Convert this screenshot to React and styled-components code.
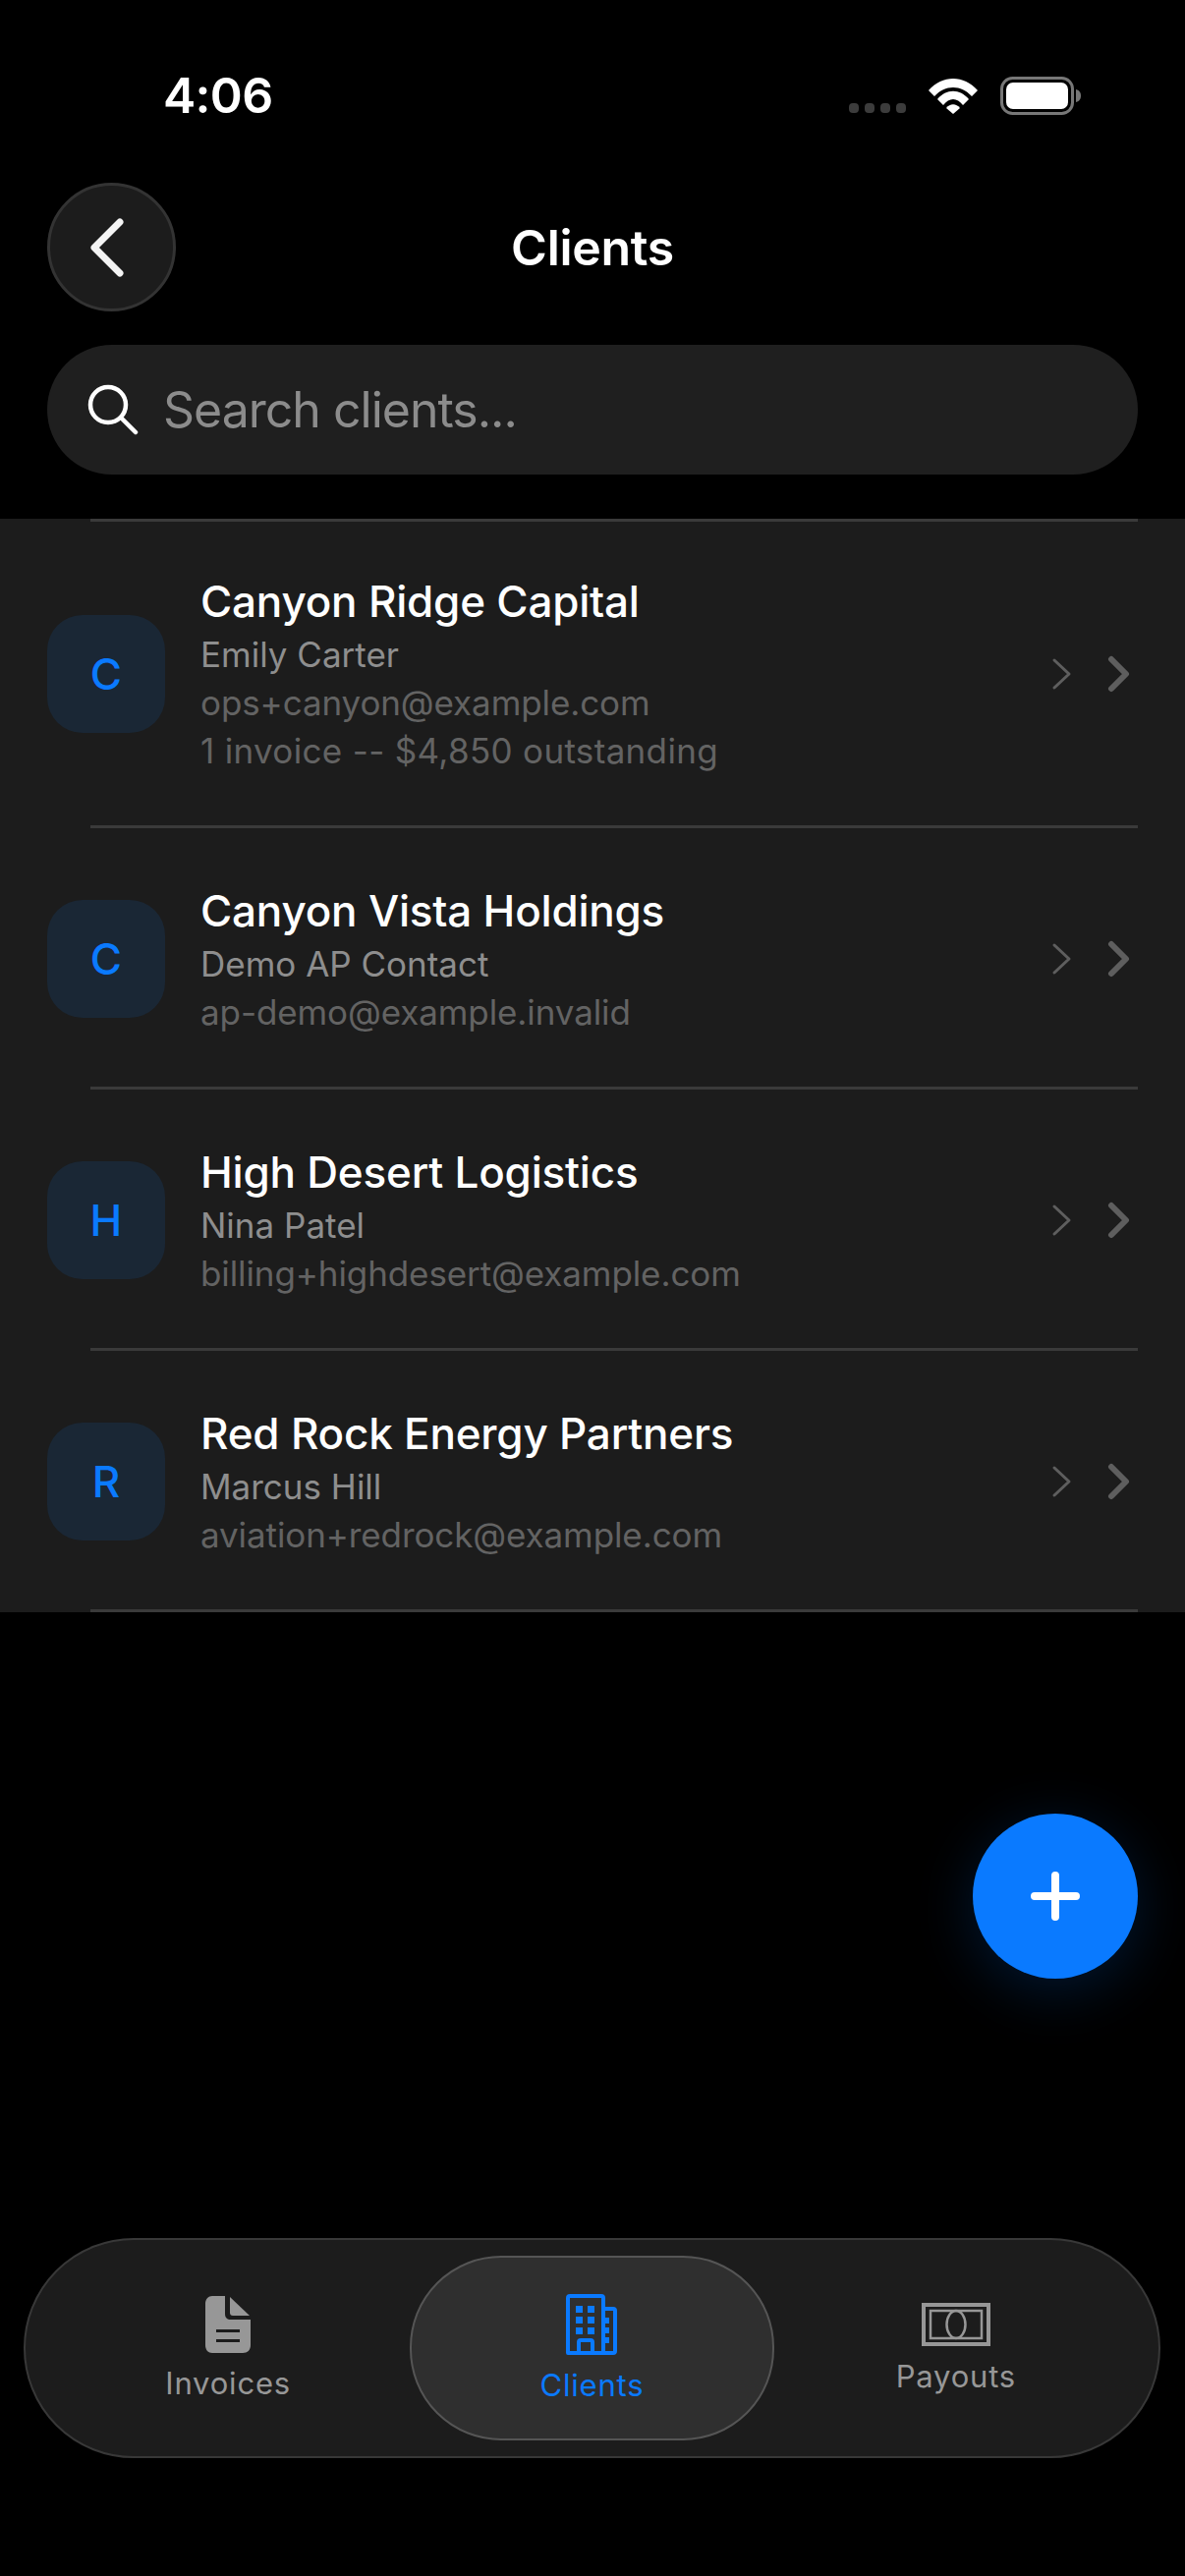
import React from "react"
import styled, { createGlobalStyle } from "styled-components"

const GlobalStyle = createGlobalStyle`
  html, body {
    margin: 0;
    padding: 0;
    background: #000;
    font-family: "Inter", "Liberation Sans", sans-serif;
  }
`

const clients = [
  { name: "Canyon Ridge Capital", contact: "Emily Carter", email: "ops+canyon@example.com", note: "1 invoice -- $4,850 outstanding" },
  { name: "Canyon Vista Holdings", contact: "Demo AP Contact", email: "ap-demo@example.invalid" },
  { name: "High Desert Logistics", contact: "Nina Patel", email: "billing+highdesert@example.com" },
  { name: "Red Rock Energy Partners", contact: "Marcus Hill", email: "aviation+redrock@example.com" },
]

const App = () => (
  <Page>
    <GlobalStyle />
    <StatusBar>
      <Clock>4:06</Clock>
      <StatusIcons>
        <Dots><i /><i /><i /><i /></Dots>
        <svg width="52" height="38" viewBox="0 0 52 38">
          <path d="M1 14 C15 -2 37 -2 51 14 L45 20 C34 8 18 8 7 20 Z" fill="#fff" />
          <path d="M10 23 C19 12 33 12 42 23 L36 29 C30 21 22 21 16 29 Z" fill="#fff" />
          <path d="M19 32 C23 27 29 27 33 32 L26 38 Z" fill="#fff" />
        </svg>
        <svg width="84" height="40" viewBox="0 0 84 40">
          <rect x="1.500" y="1.500" width="72" height="36" rx="11" fill="none" stroke="#777" strokeWidth="3" />
          <rect x="6" y="6" width="63" height="27" rx="7" fill="#fff" />
          <path d="M77 13 C81 14 82 17 82 19.500 C82 22 81 25 77 26 Z" fill="#777" />
        </svg>
      </StatusIcons>
    </StatusBar>

    <NavRow>
      <BackButton>
        <svg width="40" height="62" viewBox="0 0 40 62">
          <path d="M34 5 L8 31 L34 57" fill="none" stroke="#f4f4f4" strokeWidth="7" strokeLinecap="round" strokeLinejoin="round" />
        </svg>
      </BackButton>
      <Title>Clients</Title>
    </NavRow>

    <SearchBar>
      <svg width="52" height="52" viewBox="0 0 52 52">
        <circle cx="21" cy="21" r="18" fill="none" stroke="#fff" strokeWidth="4.500" />
        <path d="M34 34 L49 49" fill="none" stroke="#fff" strokeWidth="4.500" strokeLinecap="round" />
      </svg>
      <SearchText>Search clients...</SearchText>
    </SearchBar>

    <ClientList>
      <Divider />
      {clients.map((c) => (
        <React.Fragment key={c.name}>
          <ClientRow $tall={!!c.note}>
            <Avatar>{c.name[0]}</Avatar>
            <ClientInfo>
              <ClientName>{c.name}</ClientName>
              <ContactLine>{c.contact}</ContactLine>
              <MutedLine>{c.email}</MutedLine>
              {c.note && <NoteLine>{c.note}</NoteLine>}
            </ClientInfo>
            <Chevrons>
              <svg width="22" height="34" viewBox="0 0 22 34">
                <path d="M3 3 L18 17 L3 31" fill="none" stroke="#5e5e5e" strokeWidth="3" strokeLinecap="round" strokeLinejoin="round" />
              </svg>
              <svg width="26" height="38" viewBox="0 0 26 38">
                <path d="M5 4 L20 19 L5 34" fill="none" stroke="#5e5e5e" strokeWidth="6" strokeLinecap="round" strokeLinejoin="round" />
              </svg>
            </Chevrons>
          </ClientRow>
          <Divider />
        </React.Fragment>
      ))}
    </ClientList>

    <AddButton>
      <svg width="50" height="50" viewBox="0 0 50 50">
        <path d="M25 4 V46 M4 25 H46" stroke="#fff" strokeWidth="8" strokeLinecap="round" />
      </svg>
    </AddButton>

    <TabBar>
      <Tab>
        <svg width="46" height="58" viewBox="0 0 46 58">
          <path d="M7 0 H20 V18 C20 22 22 24 26 24 H46 V50 C46 55 43 58 38 58 H7 C3 58 0 55 0 50 V8 C0 3 3 0 7 0 Z M11 34 V37 H35 V34 Z M11 44 V47 H35 V44 Z" fill="#979797" fillRule="evenodd" />
          <path d="M25 1 L45 20 H28 C26 20 25 19 25 17 Z" fill="#979797" />
        </svg>
        <TabLabel>Invoices</TabLabel>
      </Tab>
      <Tab $active>
        <svg width="52" height="62" viewBox="0 0 52 62" fill="none">
          <path d="M2 60 V4 Q2 2 4 2 H36 Q38 2 38 4 V60 Z" stroke="#0a7aff" strokeWidth="4" strokeLinejoin="round" />
          <path d="M38 15 H48 Q50 15 50 17 V58 Q50 60 48 60 H36" stroke="#0a7aff" strokeWidth="4" strokeLinejoin="round" />
          <path d="M13 60 V49 Q13 47 15 47 H25 Q27 47 27 49 V60" stroke="#0a7aff" strokeWidth="4" />
          <g fill="#0a7aff">
            <rect x="10" y="12" width="7" height="7" />
            <rect x="22" y="12" width="7" height="7" />
            <rect x="10" y="23" width="7" height="7" />
            <rect x="22" y="23" width="7" height="7" />
            <rect x="10" y="34" width="7" height="7" />
            <rect x="22" y="34" width="7" height="7" />
            <rect x="38" y="24" width="6" height="6" />
            <rect x="38" y="34" width="6" height="6" />
            <rect x="38" y="44" width="6" height="6" />
          </g>
        </svg>
        <TabLabel $active>Clients</TabLabel>
      </Tab>
      <Tab>
        <svg width="70" height="44" viewBox="0 0 70 44" fill="none">
          <rect x="2" y="2" width="66" height="40" stroke="#979797" strokeWidth="4" />
          <rect x="9" y="8" width="52" height="28" stroke="#979797" strokeWidth="2.500" />
          <ellipse cx="35" cy="22" rx="9.500" ry="14" stroke="#979797" strokeWidth="2.500" />
        </svg>
        <TabLabel>Payouts</TabLabel>
      </Tab>
    </TabBar>
  </Page>
)

const Page = styled.div`
  position: relative;
  box-sizing: border-box;
  width: 1206px;
  height: 2622px;
  overflow: hidden;
  background: #000;
  color: #fff;
  display: flex;
  flex-direction: column;
`

const StatusBar = styled.div`
  height: 186px;
  box-sizing: border-box;
  padding: 64px 104px 0 166px;
  display: flex;
  justify-content: space-between;
  align-items: flex-start;
`

const Clock = styled.div`
  font-size: 50px;
  line-height: 66px;
  font-weight: 600;
  letter-spacing: -0.7px;
`

const StatusIcons = styled.div`
  display: flex;
  align-items: flex-start;
  margin-top: 14px;
  gap: 22px;
`

const Dots = styled.div`
  display: flex;
  gap: 6px;
  margin-top: 27px;

  & i {
    width: 10px;
    height: 10px;
    border-radius: 4px;
    background: #3c3c3c;
  }
`

const NavRow = styled.div`
  display: grid;
  grid-template-columns: 131px 1fr 131px;
  align-items: center;
  padding: 0 48px;
  height: 131px;
`

const BackButton = styled.div`
  box-sizing: border-box;
  width: 131px;
  height: 131px;
  border-radius: 50%;
  background: #1c1c1c;
  border: 3px solid #333;
  display: flex;
  align-items: center;
  justify-content: center;
  padding-right: 12px;
`

const Title = styled.div`
  text-align: center;
  font-size: 50px;
  font-weight: 600;
  letter-spacing: -0.3px;
`

const SearchBar = styled.div`
  margin: 34px 48px 45px;
  height: 132px;
  border-radius: 66px;
  background: #1f1f1f;
  display: flex;
  align-items: center;
  padding-left: 41px;
  gap: 25px;
`

const SearchText = styled.div`
  font-size: 50px;
  letter-spacing: -1px;
  color: #8c8c8c;
`

const ClientList = styled.div`
  background: #1c1c1c;
`

const Divider = styled.div`
  height: 3px;
  margin-left: 92px;
  margin-right: 48px;
  background: #3a3a3a;
`

const ClientRow = styled.div`
  box-sizing: border-box;
  height: ${(p) => (p.$tall ? "309px" : "263px")};
  padding: ${(p) => (p.$tall ? "0" : "3px")} 53px 0 48px;
  display: flex;
  align-items: center;
`

const Avatar = styled.div`
  flex: none;
  width: 120px;
  height: 120px;
  border-radius: 36px;
  background: #1a2735;
  color: #0a7aff;
  font-size: 44px;
  font-weight: 500;
  display: flex;
  align-items: center;
  justify-content: center;
`

const ClientInfo = styled.div`
  flex: 1;
  margin-left: 36px;
  padding-top: 1px;
`

const ClientName = styled.div`
  font-size: 44px;
  line-height: 56px;
  margin-bottom: 2px;
  font-weight: 550;
  letter-spacing: -0.2px;
  color: #fff;
`

const ContactLine = styled.div`
  font-size: 35px;
  line-height: 49px;
  color: #8e8e8e;
`

const MutedLine = styled.div`
  font-size: 35px;
  line-height: 49px;
  letter-spacing: -0.1px;
  color: #636363;
`

const NoteLine = styled(MutedLine)`
  letter-spacing: 0.33px;
`

const Chevrons = styled.div`
  display: flex;
  align-items: center;
  gap: 34px;
  margin-right: 1px;
`

const AddButton = styled.div`
  position: absolute;
  left: 990px;
  top: 1846px;
  width: 168px;
  height: 168px;
  border-radius: 50%;
  background: #0a7aff;
  box-shadow: 0 12px 60px rgba(10, 122, 255, 0.2);
  display: flex;
  align-items: center;
  justify-content: center;
`

const TabBar = styled.div`
  box-sizing: border-box;
  position: absolute;
  left: 24px;
  top: 2278px;
  width: 1157px;
  height: 224px;
  border-radius: 112px;
  border: 2px solid #383838;
  background: #1c1c1c;
  padding: 16px 21px;
  display: grid;
  grid-template-columns: repeat(3, 1fr);
`

const Tab = styled.div`
  box-sizing: border-box;
  display: flex;
  flex-direction: column;
  align-items: center;
  justify-content: center;
  gap: 11px;
  border-radius: 93px;
  border: 2px solid ${(p) => (p.$active ? "#555" : "transparent")};
  background: ${(p) => (p.$active ? "#2f2f2f" : "transparent")};
  padding-top: 3px;
`

const TabLabel = styled.div`
  font-size: 31px;
  line-height: 40px;
  letter-spacing: 0.8px;
  color: ${(p) => (p.$active ? "#0a7aff" : "#979797")};
`

export default App
